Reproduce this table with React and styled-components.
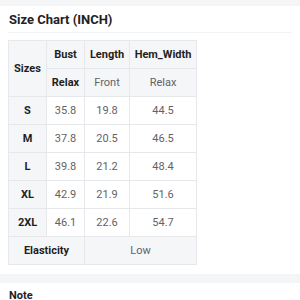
import React from 'react'
import styled, { createGlobalStyle } from 'styled-components'

const GlobalStyle = createGlobalStyle`
  body {
    margin: 0;
    background: #FFFFFF;
    font-family: Roboto, "Liberation Sans", sans-serif;
  }
`

const Band = styled.div`
  height: ${props => props.h || 9}px;
  background-color: #F4F5F7;
`

const Section = styled.div`
  padding: 0 8px;
`

const Title = styled.h3`
  margin: 0;
  height: 26px;
  line-height: 27px;
  font-size: 13px;
  font-weight: 700;
  color: #222222;
  padding-left: 1px;
  border-bottom: 1px solid #F2F3F5;
`

const Table = styled.table`
  margin-top: 7px;
  width: 188px;
  table-layout: fixed;
  border-collapse: collapse;
  font-size: 11px;
`

const Cell = styled.td`
  height: 27px;
  padding: 0;
  border: 1px solid #E6E8EB;
  text-align: center;
  white-space: nowrap;
  background-color: ${props => props.head ? '#F5F6F8' : '#FFFFFF'};
  color: ${props => props.bold ? '#1F1F1F' : '#5F6368'};
  font-weight: ${props => props.bold ? 700 : 400};
`

const NoteTitle = styled.div`
  padding: 8px 9px 0;
  line-height: 10px;
  font-size: 11px;
  font-weight: 700;
  color: #222222;
`

const rows = [
  ['S', '35.8', '19.8', '44.5'],
  ['M', '37.8', '20.5', '46.5'],
  ['L', '39.8', '21.2', '48.4'],
  ['XL', '42.9', '21.9', '51.6'],
  ['2XL', '46.1', '22.6', '54.7'],
]

const App = () => {
  return (
    <>
      <GlobalStyle />
      <Band h={6} />
      <Section>
        <Title>Size Chart (INCH)</Title>
        <Table>
          <colgroup>
            <col style={{ width: 38 }} />
            <col style={{ width: 38 }} />
            <col style={{ width: 45 }} />
            <col style={{ width: 67 }} />
          </colgroup>
          <tbody>
            <tr>
              <Cell as="th" rowSpan={2} head bold>Sizes</Cell>
              <Cell as="th" head bold>Bust</Cell>
              <Cell as="th" head bold>Length</Cell>
              <Cell as="th" head bold>Hem_Width</Cell>
            </tr>
            <tr>
              <Cell head bold>Relax</Cell>
              <Cell head>Front</Cell>
              <Cell head>Relax</Cell>
            </tr>
            {rows.map(r => (
              <tr key={r[0]}>
                <Cell head bold>{r[0]}</Cell>
                <Cell>{r[1]}</Cell>
                <Cell>{r[2]}</Cell>
                <Cell>{r[3]}</Cell>
              </tr>
            ))}
            <tr>
              <Cell head bold colSpan={2}>Elasticity</Cell>
              <Cell head colSpan={2}>Low</Cell>
            </tr>
          </tbody>
        </Table>
      </Section>
      <Band h={9} style={{ marginTop: 9 }} />
      <NoteTitle>Note</NoteTitle>
    </>
  )
}

export default App
